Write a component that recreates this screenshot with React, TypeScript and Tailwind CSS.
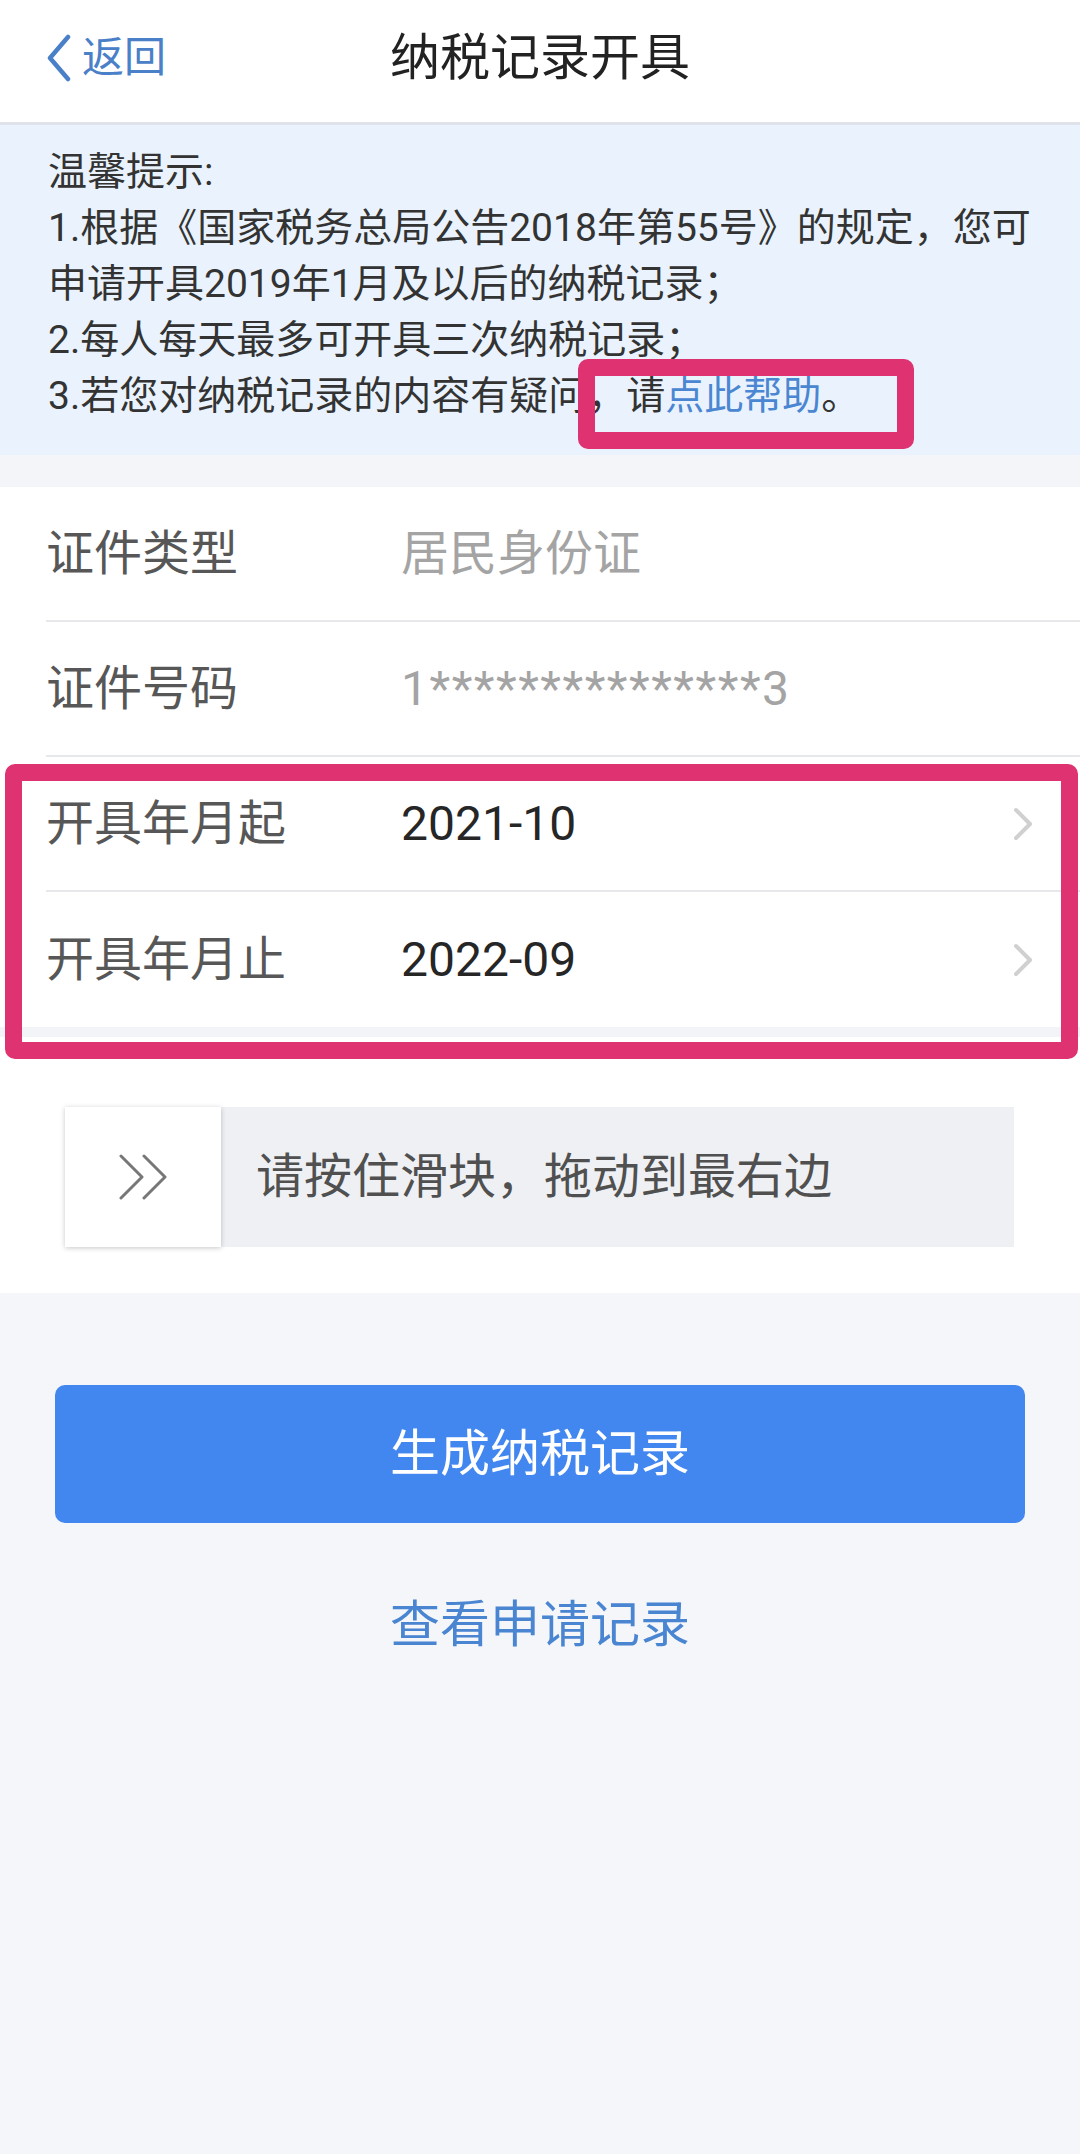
import React from "react";

const FONT = "font-[family-name:Roboto,'Noto_Sans_CJK_SC',sans-serif]";

function RightChevron() {
  return (
    <svg width="22" height="34" viewBox="0 0 22 34" fill="none">
      <path d="M4 3 L18 17 L4 31" stroke="#d0d0d0" strokeWidth="4" strokeLinecap="round" strokeLinejoin="round" />
    </svg>
  );
}

function Row({ label, value, dark, chevron, divider, wide }: { label: string; value: string; dark?: boolean; chevron?: boolean; divider?: boolean; wide?: boolean }) {
  return (
    <div className="pl-[46px]">
      <div className={`flex h-[135px] items-center pr-[46px] ${divider ? "border-b-2 border-[#e7e8eb]" : ""}`}>
        <div className="w-[355px] shrink-0 text-[48px] text-[#575757]">{label}</div>
        <div className={`flex-1 text-[48px] ${dark ? "text-[#262626]" : "text-[#a4a4a4]"} ${wide ? "tracking-[1.5px]" : ""}`}>{value}</div>
        {chevron && <RightChevron />}
      </div>
    </div>
  );
}

export default function App() {
  return (
    <div className={`min-h-screen w-[1080px] bg-[#f4f6fa] ${FONT}`}>
      {/* Header */}
      <div className="grid h-[125px] grid-cols-[1fr_auto_1fr] items-center border-b-[3px] border-[#dfe3e9] bg-white pb-[6px]">
        <div className="flex items-center pl-[45px]">
          <svg width="27" height="48" viewBox="0 0 27 48" fill="none">
            <path d="M23 3 L5 24 L23 45" stroke="#4a80c8" strokeWidth="4.5" strokeLinecap="round" strokeLinejoin="round" />
          </svg>
          <span className="ml-[10px] text-[42px] leading-none text-[#4a80c8]">返回</span>
        </div>
        <div className="text-[50px] leading-none text-[#222]">纳税记录开具</div>
        <div />
      </div>

      {/* Tips */}
      <div className="relative bg-[#eaf3fd] pb-[31px] pl-[48px] pr-[20px] pt-[19px] text-[39px] leading-[56px] text-[#333]">
        <div>温馨提示:</div>
        <div>1.根据《国家税务总局公告2018年第55号》的规定，您可</div>
        <div>申请开具2019年1月及以后的纳税记录；</div>
        <div>2.每人每天最多可开具三次纳税记录；</div>
        <div>
          3.若您对纳税记录的内容有疑问，请<span className="text-[#4a86d1]">点此帮助</span>。
        </div>
        <div className="absolute left-[578px] top-[234px] h-[90px] w-[336px] rounded-[10px] border-[17px] border-[#de3370]" />
      </div>

      <div className="h-[32px] bg-[#f4f5f9]" />

      {/* Form */}
      <div className="relative bg-white">
        <Row label="证件类型" value="居民身份证" divider />
        <Row label="证件号码" value="1***************3" divider wide />
        <Row label="开具年月起" value="2021-10" dark chevron divider />
        <Row label="开具年月止" value="2022-09" dark chevron />
        <div className="h-[10px] bg-[#f3f4f7]" />

        <div className="px-[65px] pb-[46px] pt-[70px]">
          <div className="flex h-[140px] w-[949px] items-center bg-[#eff0f4]">
            <div className="flex h-[140px] w-[156px] shrink-0 items-center justify-center bg-white shadow-[0_1px_5px_rgba(0,0,0,0.22)]">
              <svg width="52" height="46" viewBox="0 0 52 46" fill="none">
                <path d="M4 2 L25 23 L4 44" stroke="#777" strokeWidth="3" strokeLinecap="round" strokeLinejoin="round" />
                <path d="M27 2 L48 23 L27 44" stroke="#777" strokeWidth="3" strokeLinecap="round" strokeLinejoin="round" />
              </svg>
            </div>
            <div className="ml-[35px] text-[48px] text-[#505050]">请按住滑块，拖动到最右边</div>
          </div>
        </div>

        <div className="absolute left-[5px] top-[277px] h-[295px] w-[1073px] rounded-[10px] border-[17px] border-[#de3370]" />
      </div>

      {/* Actions */}
      <div className="px-[55px] pt-[92px]">
        <div className="flex h-[138px] items-center justify-center rounded-[10px] bg-[#4286f0] text-[50px] text-white">
          生成纳税记录
        </div>
        <div className="mt-[70px] text-center text-[50px] leading-[64px] text-[#4a85d2]">查看申请记录</div>
      </div>
    </div>
  );
}
